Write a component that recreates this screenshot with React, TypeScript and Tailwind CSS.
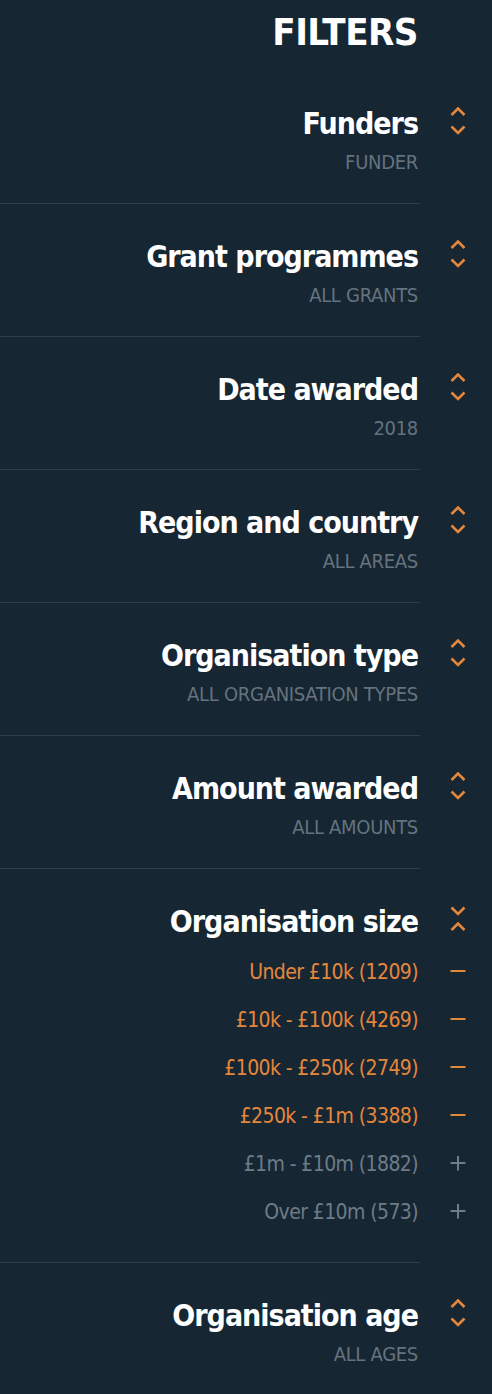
import React from 'react';

const sections = [
  { title: 'Funders', value: 'FUNDER' },
  { title: 'Grant programmes', value: 'ALL GRANTS' },
  { title: 'Date awarded', value: '2018' },
  { title: 'Region and country', value: 'ALL AREAS' },
  { title: 'Organisation type', value: 'ALL ORGANISATION TYPES' },
  { title: 'Amount awarded', value: 'ALL AMOUNTS' },
];

const sizes = [
  { label: 'Under £10k (1209)', active: true },
  { label: '£10k - £100k (4269)', active: true },
  { label: '£100k - £250k (2749)', active: true },
  { label: '£250k - £1m (3388)', active: true },
  { label: '£1m - £10m (1882)', active: false },
  { label: 'Over £10m (573)', active: false },
];

const Chevrons = ({ open }: { open?: boolean }) => (
  <svg width="16" height="28" viewBox="0 0 16 28" fill="none" stroke="#e5873b" strokeWidth="2.6">
    {open ? (
      <>
        <polyline points="1.5,2.5 8,9 14.5,2.5" />
        <polyline points="1.5,25 8,18.5 14.5,25" />
      </>
    ) : (
      <>
        <polyline points="1.5,8 8,1.5 14.5,8" />
        <polyline points="1.5,19.5 8,26 14.5,19.5" />
      </>
    )}
  </svg>
);

const Toggle = ({ active }: { active: boolean }) => (
  <svg width="16" height="16" viewBox="0 0 16 16" fill="none" stroke={active ? '#e5873b' : '#6d7c87'} strokeWidth="2">
    <line x1="0.5" y1="7" x2="15.5" y2="7" />
    {!active && <line x1="8" y1="-0.5" x2="8" y2="14.5" />}
  </svg>
);

const Heading = ({ title, open }: { title: string; open?: boolean }) => (
  <div className="flex">
    <div className="w-[420px] pr-[2px] text-right text-[30px] leading-[34px] font-bold text-white tracking-[-1px]">
      {title}
    </div>
    <div className="pl-[30px]">
      <Chevrons open={open} />
    </div>
  </div>
);

const Section = ({ title, value, last }: { title: string; value: string; last?: boolean }) => (
  <>
    <div className="pt-[36px] pb-[30px]">
      <Heading title={title} />
      <div className="mt-[11px] w-[420px] pr-[2px] text-right text-[20px] leading-[21px] tracking-[-0.3px] text-[#65737e]">
        {value}
      </div>
    </div>
    {!last && <div className="h-px w-[420px] bg-[#2d3d49]" />}
  </>
);

export default function App() {
  return (
    <div className="min-h-screen w-[492px] bg-[#162633] font-['Liberation_Sans_Narrow','DejaVu_Sans_Condensed',sans-serif] overflow-hidden">
      <div className="pt-[11px] mb-[18px] w-[420px] pr-[2px] text-right text-[38px] leading-[42px] font-bold tracking-[-0.5px] text-white">
        FILTERS
      </div>
      {sections.map((s) => (
        <Section key={s.title} title={s.title} value={s.value} />
      ))}
      <div className="pt-[36px] pb-[26px]">
        <Heading title="Organisation size" open />
        <div className="mt-[9px] flex flex-col">
          {sizes.map((o) => (
            <div key={o.label} className="flex h-[48px] items-center">
              <div
                className={`w-[420px] pr-[2px] text-right text-[21px] leading-[48px] tracking-[-0.6px] ${
                  o.active ? 'text-[#e5873b]' : 'text-[#6d7c87]'
                }`}
              >
                {o.label}
              </div>
              <div className="pl-[30px] flex items-center">
                <Toggle active={o.active} />
              </div>
            </div>
          ))}
        </div>
      </div>
      <div className="h-px w-[420px] bg-[#2d3d49]" />
      <Section title="Organisation age" value="ALL AGES" last />
    </div>
  );
}
